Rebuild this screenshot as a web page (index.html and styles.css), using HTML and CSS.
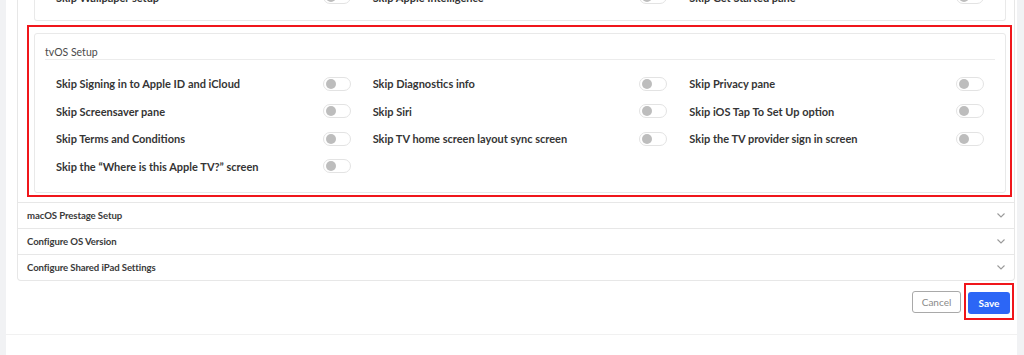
FILE: index.html
```html
<!DOCTYPE html>
<html lang="en">
<head>
  <meta charset="UTF-8">
  <meta name="viewport" content="width=device-width, initial-scale=1.0">
  <title>Prestage Settings</title>
  <link rel="stylesheet" href="styles.css">
</head>
<body>
<div id="page">
  <div class="card">
    <div class="section-body">
      <div class="inner-box prev-box">
        <div class="grid prev-grid">
          <div class="opt"><span>Skip Wallpaper setup</span><span class="toggle"></span></div>
          <div class="opt"><span>Skip Apple Intelligence</span><span class="toggle"></span></div>
          <div class="opt"><span>Skip Get Started pane</span><span class="toggle"></span></div>
        </div>
      </div>
    </div>

    <div class="section-body">
      <div class="highlight">
        <div class="inner-box">
          <div class="box-title">tvOS Setup</div>
          <div class="grid">
            <div class="opt"><span>Skip Signing in to Apple ID and iCloud</span><span class="toggle"></span></div>
            <div class="opt"><span>Skip Diagnostics info</span><span class="toggle"></span></div>
            <div class="opt"><span>Skip Privacy pane</span><span class="toggle"></span></div>
            <div class="opt"><span>Skip Screensaver pane</span><span class="toggle"></span></div>
            <div class="opt"><span>Skip Siri</span><span class="toggle"></span></div>
            <div class="opt"><span>Skip iOS Tap To Set Up option</span><span class="toggle"></span></div>
            <div class="opt"><span>Skip Terms and Conditions</span><span class="toggle"></span></div>
            <div class="opt"><span>Skip TV home screen layout sync screen</span><span class="toggle"></span></div>
            <div class="opt"><span>Skip the TV provider sign in screen</span><span class="toggle"></span></div>
            <div class="opt"><span>Skip the “Where is this Apple TV?” screen</span><span class="toggle"></span></div>
          </div>
        </div>
      </div>
    </div>

    <div class="acc-row">
      <span>macOS Prestage Setup</span>
      <svg class="chevron" width="8" height="5" viewBox="0 0 8 5"><path d="M0.5 0.5 L4 4 L7.5 0.5" fill="none" stroke="#9a9a9a" stroke-width="1.1"/></svg>
    </div>
    <div class="acc-row">
      <span>Configure OS Version</span>
      <svg class="chevron" width="8" height="5" viewBox="0 0 8 5"><path d="M0.5 0.5 L4 4 L7.5 0.5" fill="none" stroke="#9a9a9a" stroke-width="1.1"/></svg>
    </div>
    <div class="acc-row">
      <span>Configure Shared iPad Settings</span>
      <svg class="chevron" width="8" height="5" viewBox="0 0 8 5"><path d="M0.5 0.5 L4 4 L7.5 0.5" fill="none" stroke="#9a9a9a" stroke-width="1.1"/></svg>
    </div>
  </div>

  <div class="actions">
    <button class="btn-cancel">Cancel</button>
    <div class="save-mark"><button class="btn-save">Save</button></div>
  </div>

  <div class="page-foot"></div>
</div>
</body>
</html>
```

FILE: styles.css
```css
body {
    margin: 0;
    padding: 0;
    background-color: #f1f2f4;
    font-family: Lato, "Noto Sans", Arial, sans-serif;
    color: #333;
    overflow: hidden;
}

#page {
    margin-left: 6px;
    width: 1011px;
    height: 400px;
    margin-top: -28px;
    background-color: #fff;
}

.card {
    margin-left: 11px;
    width: 996px;
    border: 1px solid #e7e7e7;
    border-top: none;
    border-radius: 0 0 4px 4px;
}

.section-body {
    padding: 0 8px 0 9px;
}

.inner-box {
    border: 1px solid #e9e9e9;
    border-radius: 3px;
    padding: 0 10px;
}

.prev-box {
    margin-left: 7px;
    border-top: none;
    padding-top: 18px;
    margin-bottom: 4px;
}

.highlight {
    border: 2px solid #f0161b;
    padding: 6px 4px 2px 5px;
    margin-bottom: 5px;
    margin-right: -6px;
}

.box-title {
    font-size: 10.5px;
    line-height: 14px;
    color: #4a4a4a;
    padding: 11px 0 0 0;
    border-bottom: 1px solid #ececec;
    margin-bottom: 17px;
}

.grid {
    display: grid;
    grid-template-columns: repeat(3, 1fr);
    grid-auto-rows: 27.6px;
    padding-bottom: 5px;
}

.prev-grid {
    padding-bottom: 2px;
}

.opt {
    display: flex;
    align-items: center;
    justify-content: space-between;
    padding: 0 11px;
    font-size: 11px;
    font-weight: 700;
    color: #353535;
    height: 14px;
}

.toggle {
    display: inline-block;
    position: relative;
    width: 26px;
    height: 12px;
    border: 1px solid #e3e3e3;
    border-radius: 7px;
    background-color: #fff;
}

.toggle::before {
    content: "";
    position: absolute;
    left: 2px;
    top: 1px;
    width: 10px;
    height: 10px;
    border-radius: 50%;
    background-color: #bdbdbd;
}

.acc-row {
    display: flex;
    align-items: center;
    justify-content: space-between;
    height: 25px;
    padding: 0 9px 0 9px;
    border-top: 1px solid #e7e7e7;
    font-size: 9.6px;
    letter-spacing: -0.1px;
    font-weight: 700;
    color: #3a3a3a;
}

.actions {
    display: flex;
    justify-content: flex-end;
    align-items: center;
    gap: 3px;
    padding: 3px 3px 0 0;
    height: 36px;
}

.actions button {
    font-family: Lato, "Noto Sans", Arial, sans-serif;
    font-size: 10px;
    height: 22px;
    border-radius: 3px;
    cursor: pointer;
}

.btn-cancel {
    width: 49px;
    background-color: #fff;
    border: 1px solid #a9a9a9;
    color: #8a8a8a;
}

.save-mark {
    border: 2px solid #f0161b;
    padding: 6px 2px 4px 2px;
}

.btn-save {
    width: 42px;
    background-color: #2c66f6;
    border: none;
    color: #fff;
    font-weight: 700;
}

.page-foot {
    margin-top: 14px;
    border-top: 1px solid #f1f1f1;
}
```
